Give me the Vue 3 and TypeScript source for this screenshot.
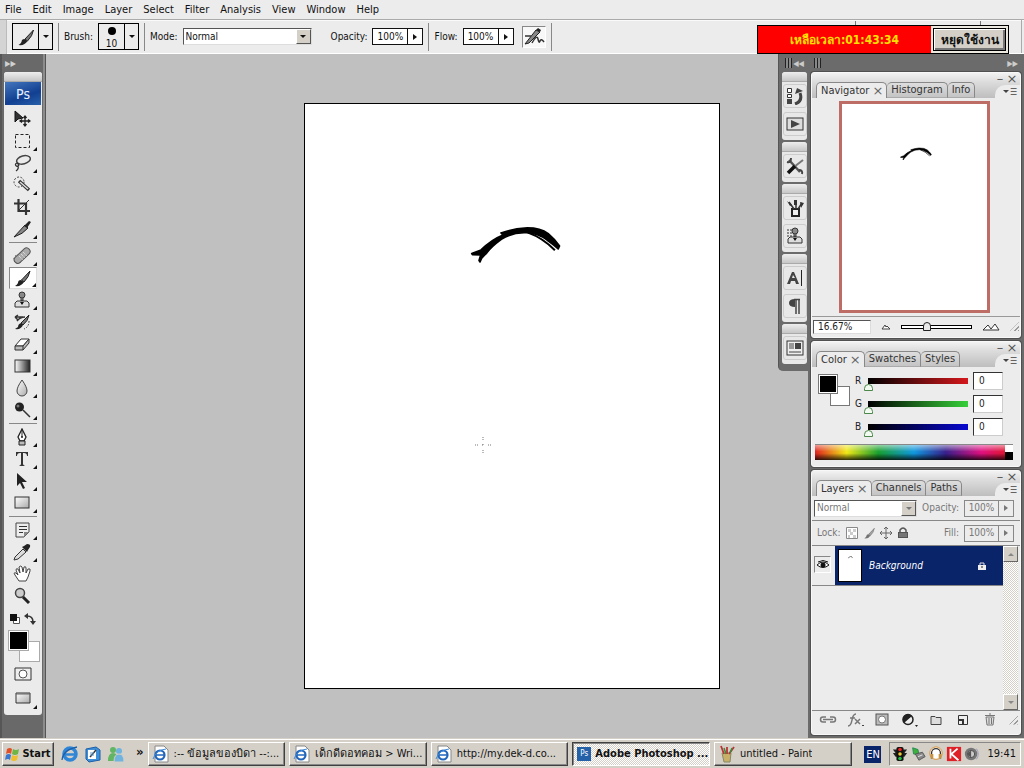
<script setup lang="ts">
import { ref } from 'vue'

interface Tool { name: string; art: string; more?: boolean; active?: boolean }

const menus = ['File', 'Edit', 'Image', 'Layer', 'Select', 'Filter', 'Analysis', 'View', 'Window', 'Help']

const brushArt = '<path d="M17 2 L8.500 11 L11 13 Q16 8 17 2Z" fill="#777" stroke="#222" stroke-width="1"/><path d="M8 11 Q5 11 5 14 Q4 16 2 17 Q8 18 11 13Z" fill="#222"/>'
const stampArt = '<circle cx="9" cy="4" r="3" fill="#888" stroke="#333"/><path d="M8 7v3h2V7" fill="#888" stroke="#333"/><path d="M4 10h10l2 2v4H2v-4z" fill="#ddd" stroke="#333"/><path d="M7 11h4l-2 3z" fill="#111"/>'

const toolGroups: Tool[][] = [
  [
    { name: 'Move', art: '<path d="M2 1v11l3-3 5-1z" fill="#333" stroke="#111"/><path d="M12 6v10M7 11h10M10.500 8l1.500-2 1.500 2M10.500 14l1.500 2 1.500-2M9 9.500L7 11l2 1.500M15 9.500l2 1.500-2 1.500" stroke="#222" stroke-width="1.300" fill="none"/>' },
    { name: 'Rectangular marquee', more: true, art: '<rect x="2.500" y="2.500" width="14" height="13" fill="none" stroke="#222" stroke-dasharray="3 2"/>' },
    { name: 'Lasso', more: true, art: '<ellipse cx="10.500" cy="6" rx="7" ry="4" fill="none" stroke="#444" stroke-width="1.500" transform="rotate(-15 10 6)"/><path d="M4 9c-3 1-1 4 1 3s0-3-1-2M5 12q1 3-2 5" fill="none" stroke="#333" stroke-width="1.300"/>' },
    { name: 'Quick selection', more: true, art: '<circle cx="6" cy="6" r="5" fill="none" stroke="#444" stroke-dasharray="2 1.500"/><path d="M6 5l10 9" stroke="#333" stroke-width="3.500"/><path d="M7 6l8 7" stroke="#ddd" stroke-width="1.500"/>' },
    { name: 'Crop', art: '<path d="M5.500 1v12H17M1 5.500h12V17" fill="none" stroke="#333" stroke-width="2.200"/><path d="M5 13L16 2" stroke="#333"/>' },
    { name: 'Slice', more: true, art: '<path d="M1 17L12 5l3 3q-5 6-14 9z" fill="#888" stroke="#222"/><path d="M11 6l5-5 2 1-4 6z" fill="#222"/>' },
  ],
  [
    { name: 'Healing brush', more: true, art: '<circle cx="5" cy="12" r="4" fill="none" stroke="#444" stroke-dasharray="1.500 1.500"/><rect x="0" y="5" width="19" height="7" rx="3.500" fill="#aaa" stroke="#555" transform="rotate(-43 9.500 9)"/><path d="M8 7l4 4M6 9l4 4M10 5l4 4" stroke="#eee" stroke-dasharray="1 1"/>' },
    { name: 'Brush', more: true, active: true, art: brushArt },
    { name: 'Clone stamp', more: true, art: stampArt },
    { name: 'History brush', more: true, art: '<path d="M16 2L8 10l2 2q5-4 6-10z" fill="#777" stroke="#222"/><path d="M8 10q-3 1-3 4l-3 2q6 1 8-4z" fill="#222"/><path d="M2 4h8M2 4l3-2M2 4l3 3M4 8q3-4 8-4" fill="none" stroke="#333" stroke-width="1.500"/><path d="M16 8q0 6-5 8" fill="none" stroke="#333" stroke-dasharray="1.500 1.500"/>' },
    { name: 'Eraser', more: true, art: '<path d="M2 11l6-7h8l-6 7z" fill="#fff" stroke="#333"/><path d="M2 11v4h8l6-7V4l-6 7z" fill="#bbb" stroke="#333"/><path d="M10 11v4" stroke="#333"/>' },
    { name: 'Gradient', more: true, art: '<rect x="2" y="3" width="15" height="12" fill="url(#toolFade)" stroke="#333"/>' },
    { name: 'Blur', more: true, art: '<path d="M9 1Q4 8 4 12a5 5 0 0 0 10 0Q14 8 9 1z" fill="url(#toolLight)" stroke="#444"/>' },
    { name: 'Dodge', more: true, art: '<circle cx="6.500" cy="6" r="4.500" fill="#222"/><circle cx="5" cy="5" r="1.500" fill="#777"/><path d="M10 9l7 7" stroke="#333" stroke-width="1.500"/>' },
  ],
  [
    { name: 'Pen', more: true, art: '<path d="M9 1L5 9l2 4h4l2-4z" fill="#fff" stroke="#222" stroke-width="1.300"/><path d="M9 1v8" stroke="#222"/><circle cx="9" cy="9" r="1" fill="#222"/><path d="M6 13h6v4H6z" fill="#bbb" stroke="#222"/>' },
    { name: 'Type', more: true, art: '<path d="M3 2h12v4h-1q0-3-3-3h-1v11q0 1 2 2H6q2-1 2-2V3H7Q4 3 4 6H3z" fill="#333"/>' },
    { name: 'Path selection', more: true, art: '<path d="M4 1v13l3-3 3 6 2-1-3-6h5z" fill="#222"/>' },
    { name: 'Rectangle', more: true, art: '<rect x="2" y="3" width="14" height="11" fill="url(#toolLight)" stroke="#333"/>' },
  ],
  [
    { name: 'Notes', more: true, art: '<path d="M3 2h13v9l-5 5H3z" fill="#eee" stroke="#444"/><path d="M6 5.500h8M6 8.500h8M6 11.500h4" stroke="#333"/><path d="M11 16v-5h5z" fill="#888"/>' },
    { name: 'Eyedropper', more: true, art: '<path d="M1 17l1-3 8-8 3 3-8 7z" fill="#ddd" stroke="#333"/><path d="M9 4l5 5 1-2 2-3q1-3-3-3l-3 2z" fill="#222"/>' },
    { name: 'Hand', art: '<path d="M6 16L2 10q-2-3 1-2l2 2-2-5q0-2 2-1l2 4-1-6q2-2 3 0l1 5 1-5q2-1 2 1v5l2-4q3-1 2 2l-2 6-2 4z" fill="#fff" stroke="#444"/>' },
    { name: 'Zoom', art: '<circle cx="7" cy="6" r="4.500" fill="#ccc" stroke="#444" stroke-width="1.500"/><path d="M10 10l6 6" stroke="#222" stroke-width="3"/>' },
  ],
]

const dockGroups: Tool[][] = [
  [
    { name: 'History', art: '<path d="M1.500 1.500h4v4h-4zM1.500 7.500h4v3h-4z" fill="#fff" stroke="#333"/><path d="M1 12h5v5H1z" fill="#444"/><path d="M9 17q8-3 5-11" fill="none" stroke="#444" stroke-width="3"/><path d="M9 7l2-6 6 3z" fill="#444"/>' },
    { name: 'Actions', art: '<rect x="1" y="3" width="16" height="12" fill="#ddd" stroke="#333"/><path d="M5 5l9 4-9 4z" fill="#444"/>' },
  ],
  [
    { name: 'Tool presets', art: '<path d="M3 3l11 12" stroke="#555" stroke-width="2.500"/><path d="M17 3L8 10" stroke="#777" stroke-width="2"/><path d="M9 9l-7 7" stroke="#111" stroke-width="3.500"/><path d="M13 13q4 0 3 4M1 5q4 1 4-4" fill="none" stroke="#444" stroke-width="2"/>' },
  ],
  [
    { name: 'Brushes', art: '<path d="M6 10h7v7H6z" fill="#eee" stroke="#222" stroke-width="2"/><path d="M8 10L3 3M10 10V1M12 10l4-6" stroke="#333" stroke-width="1.500"/><path d="M1 2l3 5 2-1zM8 1h3v5H8zM14 3l4 1-3 5z" fill="#333"/>' },
    { name: 'Clone source', art: '<path d="M1 3h5M1 6h5M1 9h5" stroke="#333" stroke-dasharray="2 1"/>' + stampArt },
  ],
  [
    { name: 'Character', art: '<path d="M1 15L6 3h2l5 12h-3l-1-3H5l-1 3zM6 9h3L7 6z" fill="#444" fill-rule="evenodd"/><path d="M15.500 1v16" stroke="#222"/>' },
    { name: 'Paragraph', art: '<path d="M10 3v14M13 3v14M8 2.500h6" stroke="#444" stroke-width="1.500"/><path d="M9 2Q3 2 3 6t6 4z" fill="#444"/>' },
  ],
  [
    { name: 'Layer comps', art: '<rect x="1" y="2" width="16" height="14" fill="#eee" stroke="#333"/><path d="M3 5h5M3 7h5M3 9h5M3 13h12" stroke="#444"/><path d="M9 4h6v6H9z" fill="#444"/>' },
  ],
]

const channels = ref([
  { key: 'R', value: 0, color: 'red' },
  { key: 'G', value: 0, color: 'green' },
  { key: 'B', value: 0, color: 'blue' },
])

const footerIcons: Tool[] = [
  { name: 'Link layers', art: '<path d="M7 6H4a2.500 2.500 0 0 0 0 5h3M11 6h3a2.500 2.500 0 0 1 0 5h-3M4 8.500h10" fill="none" stroke="#777" stroke-width="1.500"/>' },
  { name: 'Layer style', art: '<path d="M2 15q3 0 4-6t4-6M4 7h5M9 8l5 5M14 8l-5 5" fill="none" stroke="#777" stroke-width="1.500"/><path d="M16 14h2v1h-2z" fill="#444"/>' },
  { name: 'Layer mask', art: '<rect x="3" y="3" width="12" height="11" fill="#bbb" stroke="#555"/><circle cx="9" cy="8.500" r="3.500" fill="#fff" stroke="#777"/>' },
  { name: 'Adjustment layer', art: '<circle cx="8" cy="8.500" r="5" fill="#eee" stroke="#222" stroke-width="1.500"/><path d="M12 5A5 5 0 0 0 4 12z" fill="#222"/><path d="M15 14h3l-1.500 2z" fill="#222"/>' },
  { name: 'New group', art: '<path d="M4 5.500h4l1 1h5v7H4z" fill="#ddd" stroke="#444"/>' },
  { name: 'New layer', art: '<path d="M4.500 4.500h9v9h-9z" fill="#eee" stroke="#333"/><path d="M4 9h5v5" fill="none" stroke="#333" stroke-width="2"/>' },
  { name: 'Delete layer', art: '<path d="M5 6h8l-1 8H6zM4 4.500h10M8 3h2M8 7v6M10.500 7v6" fill="#ddd" stroke="#777"/>' },
]

const ieArt = '<path d="M3 1h9l4 4v12H3z" fill="#fff" stroke="#888"/><circle cx="8" cy="10" r="4.500" fill="none" stroke="#2266bb" stroke-width="2.200"/><path d="M4 10h9" stroke="#2266bb" stroke-width="1.500"/><path d="M1 14Q4 5 14 4" fill="none" stroke="#3b8adb"/>'
const tasks = [
  { title: ':-- ข้อมูลของบิดา --:...', art: ieArt },
  { title: 'เด็กดีดอทคอม > Wri...', art: ieArt },
  { title: 'http://my.dek-d.co...', art: ieArt },
  { title: 'Adobe Photoshop ...', art: '', active: true },
  { title: 'untitled - Paint', art: '<path d="M4 8h9l-1 9H6z" fill="#c8b068" stroke="#886"/><path d="M6 9L3 1M9 9V2M11 9l5-7" stroke="#b33" stroke-width="1.800"/><path d="M8 9L6 3M12 8l2-5" stroke="#3a8a3a" stroke-width="1.500"/>' },
]

const quick = [
  { name: 'Internet Explorer', art: '<circle cx="9" cy="9" r="6" fill="none" stroke="#2f86d6" stroke-width="3.500"/><path d="M4 9.500h11" stroke="#2f86d6" stroke-width="2.500"/><path d="M1 15Q2 5 16 2" fill="none" stroke="#1c5fa8" stroke-width="1.300"/>' },
  { name: 'Show desktop', art: '<path d="M2 4l10-2 4 3v10l-11 2-3-3z" fill="#3f8fd8" stroke="#1c5fa8"/><path d="M4 5h8v9H4z" fill="#fff"/><path d="M6 12l6-7" stroke="#333" stroke-width="1.500"/><path d="M6 8h4M6 10h4" stroke="#69c"/>' },
  { name: 'Messenger', art: '<circle cx="6" cy="5" r="3" fill="#62b562"/><path d="M1 16q0-8 5-8t5 8z" fill="#62b562"/><circle cx="12" cy="6" r="3" fill="#6fb3de"/><path d="M7 17q0-8 5-8t5 8z" fill="#6fb3de" stroke="#d4d0c8"/>' },
]

const tray = [
  '<path d="M1 4h16l-3 4h3l-3 4H4L1 8h3z" fill="#222"/><rect x="5" y="1" width="8" height="16" rx="2" fill="#111"/><circle cx="9" cy="4" r="2" fill="#e22"/><circle cx="9" cy="9" r="2" fill="#ec3"/><circle cx="9" cy="14" r="2" fill="#2b4"/>',
  '<path d="M3 2l6 2 1 6-6-1z" fill="#3db03d" stroke="#285"/><path d="M6 9l8-2 3 5-7 4z" fill="#888" stroke="#555"/><path d="M9 12l5-2" stroke="#eee"/>',
  '<circle cx="9" cy="8" r="7" fill="#fff" stroke="#d98c2b"/><path d="M4 14V8a5 5 0 0 1 10 0v6" fill="none" stroke="#333" stroke-width="1.500"/><path d="M3 9h3v5H3zM12 9h3v5h-3z" fill="#c9923f"/>',
  '<path d="M1 1h16v16H1z" fill="#df2027"/><path d="M5 3v11M13 3L6 9l8 7" fill="none" stroke="#fff" stroke-width="2"/>',
  '<circle cx="8" cy="9" r="7" fill="#777"/><circle cx="8" cy="9" r="4" fill="#ccc" stroke="#444"/><path d="M8 5v8l-4-3V8z" fill="#555"/><path d="M14 3q4 6 0 12" fill="none" stroke="#99b"/>',
]

const mode = ref('Normal')
const blend = ref('Normal')
const opacity = ref('100%')
const flow = ref('100%')
const layerOpacity = ref('100%')
const fill = ref('100%')
const zoom = ref('16.67%')
</script>

<template>
  <div class="app">
    <svg class="defs" width="0" height="0" aria-hidden="true">
      <defs>
        <linearGradient id="toolFade"><stop offset="0" stop-color="#fff" /><stop offset="1" stop-color="#222" /></linearGradient>
        <linearGradient id="toolLight" x1="0" y1="0" x2="1" y2="1"><stop offset="0" stop-color="#fff" /><stop offset="1" stop-color="#aaa" /></linearGradient>
        <symbol id="artwork" viewBox="0 0 414 584">
          <g transform="translate(155 111) scale(.3333)">
            <path d="M36 115 L64 104 Q95 73 130 59 L124 53 Q165 39 195 38 Q240 36 266 55 Q285 71 300 92 L296 101 Q280 86 262 74 Q235 53 200 52 Q160 50 125 72 Q95 94 82 112 Q74 120 66 129 L61 140 L58 136 L63 119 L38 118Z" stroke="#000" stroke-width="5" stroke-linejoin="round" />
            <path d="M205 52 Q250 68 286 105" fill="none" stroke="#000" stroke-width="6" />
          </g>
        </symbol>
      </defs>
    </svg>

    <nav class="menubar" aria-label="Main menu">
      <button v-for="m in menus" :key="m" type="button">{{ m }}</button>
    </nav>

    <header class="options">
      <span class="grip"></span>
      <button class="preset" type="button" aria-label="Brush preset">
        <svg class="ico" viewBox="0 0 18 18" v-html="brushArt"></svg><i><b class="down"></b></i>
      </button>
      <span class="rule"></span>
      <span class="lbl">Brush:</span>
      <button class="preset size" type="button" aria-label="Brush size">
        <span class="tip"><b class="dot"></b>10</span><i><b class="down"></b></i>
      </button>
      <span class="rule"></span>
      <label class="lbl" for="mode">Mode:</label>
      <span class="combo modebox">
        <select id="mode" v-model="mode"><option>Normal</option></select><i><b class="down"></b></i>
      </span>
      <label class="lbl" for="opacity">Opacity:</label>
      <span class="num"><input id="opacity" v-model="opacity"><button type="button" aria-label="Adjust opacity"><b class="play"></b></button></span>
      <span class="rule"></span>
      <label class="lbl" for="flow">Flow:</label>
      <span class="num"><input id="flow" v-model="flow"><button type="button" aria-label="Adjust flow"><b class="play"></b></button></span>
      <button class="airbrush" type="button" aria-label="Airbrush">
        <svg viewBox="0 0 22 18" width="22" height="18"><path d="M2 16L13 2l4 2L6 15z" fill="#888" stroke="#222" /><path d="M13 2l2-2 3 2-1 2z" fill="#222" /><path d="M2 8h6M9 15q5-9 6-4t2 2 4 1" fill="none" stroke="#333" stroke-width="1.500" /></svg>
      </button>
      <span class="rule"></span>
      <span class="ends"><b></b><b></b></span>
      <aside class="timer">
        <span>เหลือเวลา:01:43:34</span>
        <button type="button">หยุดใช้งาน</button>
      </aside>
    </header>

    <main class="workspace">
      <section class="desk">
        <div class="page">
          <svg class="art"><use href="#artwork" /></svg>
          <svg class="cursor" viewBox="0 0 16 16"><path d="M8 0v3M8 7v2M8 13v3M0 8h3M7 8h2M13 8h3" stroke="#777" stroke-dasharray="1 1" /></svg>
        </div>
      </section>

      <aside class="toolcol">
        <div class="colhead">▸▸</div>
        <div class="toolbox">
          <div class="grab"></div>
          <div class="ps">Ps</div>
          <div class="tools">
            <div v-for="(g, i) in toolGroups" :key="i" class="tgroup">
              <button v-for="t in g" :key="t.name" type="button" :aria-label="t.name" :class="{ active: t.active, more: t.more }">
                <svg class="ico" viewBox="0 0 18 18" v-html="t.art"></svg>
              </button>
            </div>
          </div>
          <div class="mini">
            <svg viewBox="0 0 12 12" width="12" height="12"><path d="M4.500 4.500h6v6h-6z" fill="#fff" stroke="#555" /><path d="M1 1h7v7H1z" fill="#111" /></svg>
            <svg viewBox="0 0 12 12" width="12" height="12"><path d="M3 3q6 0 6 6" fill="none" stroke="#333" stroke-width="1.500" /><path d="M0 3l4-3v6zM9 12L6 8h6z" fill="#333" /></svg>
          </div>
          <div class="swatches"><span class="back"></span><span class="fore"></span></div>
          <button class="wide" type="button" aria-label="Quick mask"><svg width="18" height="14" viewBox="0 0 18 14"><path d="M1 1h16v12H1z" fill="#eee" stroke="#333" /><circle cx="9" cy="7" r="4" fill="#fff" stroke="#555" /></svg></button>
          <button class="wide more" type="button" aria-label="Screen mode"><svg width="18" height="14" viewBox="0 0 18 14"><path d="M2 2h14v10H2z" fill="url(#toolLight)" stroke="#333" /><path d="M2 3h14" stroke="#666" /></svg></button>
        </div>
      </aside>

      <aside class="docks">
        <div class="strip">
          <div class="dockhead"><b class="bars"></b><span>◂◂</span></div>
          <div class="stack">
            <div v-for="(g, i) in dockGroups" :key="i" class="dgroup">
              <div class="grab"></div>
              <button v-for="t in g" :key="t.name" type="button" :aria-label="t.name"><svg class="ico" viewBox="0 0 18 18" v-html="t.art"></svg></button>
            </div>
          </div>
        </div>

        <div class="panels">
          <div class="dockhead"><b class="bars"></b><span>▸▸</span></div>

          <section class="panel navigator">
            <div class="ptop"><button type="button" aria-label="Minimize">–</button><button type="button" aria-label="Close">×</button></div>
            <div class="tabs">
              <button class="on" type="button">Navigator <em>×</em></button><button type="button">Histogram</button><button type="button">Info</button>
              <span class="flyout"><b class="down"></b>☰</span>
            </div>
            <div class="navbody"><div class="preview"><svg><use href="#artwork" /></svg></div></div>
            <div class="navfoot">
              <input v-model="zoom" aria-label="Zoom">
              <svg width="10" height="6" viewBox="0 0 10 6"><path d="M1 5l3-4 1 2 1-1 3 3z" fill="#fff" stroke="#444" /></svg>
              <div class="slider"><input type="range" min="0" max="100" value="35" aria-label="Zoom slider"></div>
              <svg width="18" height="8" viewBox="0 0 18 8"><path d="M1 7l5-5 3 4 4-5 4 6z" fill="#fff" stroke="#333" /></svg>
              <b class="sizer"></b>
            </div>
          </section>

          <section class="panel color">
            <div class="ptop"><button type="button" aria-label="Minimize">–</button><button type="button" aria-label="Close">×</button></div>
            <div class="tabs">
              <button class="on" type="button">Color <em>×</em></button><button type="button">Swatches</button><button type="button">Styles</button>
              <span class="flyout"><b class="down"></b>☰</span>
            </div>
            <div class="colorbody">
              <div class="chips"><span class="back"></span><span class="fore"></span></div>
              <div class="rows">
                <div v-for="c in channels" :key="c.key" class="crow">
                  <label :for="'ch' + c.key">{{ c.key }}</label>
                  <input v-model="c.value" class="ramp" :class="c.color" type="range" min="0" max="255" :aria-label="c.key + ' slider'">
                  <input :id="'ch' + c.key" v-model="c.value" class="val">
                </div>
              </div>
            </div>
            <div class="spectrum"><span></span></div>
          </section>

          <section class="panel layers">
            <div class="ptop"><button type="button" aria-label="Minimize">–</button><button type="button" aria-label="Close">×</button></div>
            <div class="tabs">
              <button class="on" type="button">Layers <em>×</em></button><button type="button">Channels</button><button type="button">Paths</button>
              <span class="flyout"><b class="down"></b>☰</span>
            </div>
            <div class="lrow">
              <span class="combo"><select v-model="blend" aria-label="Blend mode"><option>Normal</option></select><i><b class="down"></b></i></span>
              <label for="lop">Opacity:</label>
              <span class="num"><input id="lop" v-model="layerOpacity"><button type="button" aria-label="Adjust layer opacity"><b class="play"></b></button></span>
            </div>
            <div class="lrow second">
              <span>Lock:</span>
              <svg width="12" height="12" viewBox="0 0 12 12"><path d="M.500 .500h11v11H.500z" fill="#fff" stroke="#888" /><path d="M2 2h3v3H2zM7 2h3v3H7zM4 5h3v3H4zM2 8h2v3H2zM7 8h3v3H7z" fill="#ccc" /></svg>
              <svg class="soft" width="12" height="12" viewBox="0 0 18 18" v-html="brushArt"></svg>
              <svg width="12" height="12" viewBox="0 0 12 12"><path d="M6 0v12M0 6h12M4 2l2-2 2 2M4 10l2 2 2-2M2 4L0 6l2 2M10 4l2 2-2 2" fill="none" stroke="#666" /></svg>
              <svg width="12" height="12" viewBox="0 0 12 12"><path d="M3 5V3q3-4 6 0v2" fill="none" stroke="#555" stroke-width="1.500" /><path d="M1 5h10v6H1z" fill="#555" /><path d="M2 7h8M2 9h8" stroke="#999" /></svg>
              <label class="fill" for="fill">Fill:</label>
              <span class="num"><input id="fill" v-model="fill"><button type="button" aria-label="Adjust fill"><b class="play"></b></button></span>
            </div>
            <div class="list">
              <div class="items">
                <div class="layer">
                  <button class="eye" type="button" aria-label="Layer visibility"><svg width="12" height="10" viewBox="0 0 12 10"><path d="M0 5Q6-1 12 5Q6 10 0 5z" fill="#fff" stroke="#111" /><circle cx="6" cy="5" r="2.500" fill="#111" /><path d="M1 2q5-3 10 0" fill="none" stroke="#111" /></svg></button>
                  <div class="name">
                    <span class="thumb"><svg><use href="#artwork" /></svg></span>
                    <span class="title">Background</span>
                    <svg width="8" height="8" viewBox="0 0 8 8"><path d="M2 3V1h4v2" fill="none" stroke="#ddd" /><path d="M0 3h8v5H0z" fill="#eee" /><path d="M3 5h2" stroke="#222" /></svg>
                  </div>
                </div>
              </div>
              <div class="scroll"><button type="button" aria-label="Scroll up"><b class="down up"></b></button><button type="button" aria-label="Scroll down"><b class="down"></b></button></div>
            </div>
            <div class="lfoot">
              <button v-for="f in footerIcons" :key="f.name" type="button" :aria-label="f.name"><svg class="ico" viewBox="0 0 18 18" v-html="f.art"></svg></button>
              <b class="sizer"></b>
            </div>
          </section>
        </div>
      </aside>
    </main>

    <footer class="taskbar">
      <button class="start" type="button">
        <svg width="16" height="16" viewBox="0 0 16 16"><path d="M2 3q3-2 5 0L6 8Q4 6 1 8z" fill="#e2502a" /><path d="M8 3q3 2 6 0l-1 5q-3 2-6 0z" fill="#6eb544" /><path d="M1 9q3-2 5 0l-1 5q-2-2-5 0z" fill="#3a77d0" /><path d="M7 9q3 2 6 0l-1 5q-3 2-6 0z" fill="#f0bd2c" /></svg>Start
      </button>
      <div class="quick">
        <button v-for="q in quick" :key="q.name" type="button" :aria-label="q.name"><svg class="ico" viewBox="0 0 18 18" v-html="q.art"></svg></button>
        <b>»</b>
      </div>
      <div class="tasks">
        <button v-for="t in tasks" :key="t.title" type="button" :class="{ pressed: t.active }">
          <span v-if="t.active" class="psicon">Ps</span>
          <svg v-else class="ico" viewBox="0 0 18 18" v-html="t.art"></svg><span class="tt">{{ t.title }}</span>
        </button>
      </div>
      <span class="lang">EN</span>
      <div class="tray">
        <svg v-for="(t, i) in tray" :key="i" viewBox="0 0 18 18" width="16" height="16" v-html="t"></svg>
        <time>19:41</time>
      </div>
    </footer>
  </div>
</template>

<style>
body { margin: 0; }
</style>

<style scoped>
.app {
  display: flex; flex-direction: column; height: 100vh; overflow: hidden;
  background: #ececec; color: #111;
  font: 11px/14px "DejaVu Sans Condensed", "Noto Sans", sans-serif;
}
.app *, .app *::before, .app *::after { box-sizing: border-box; }
button, input, select { font: inherit; color: inherit; margin: 0; padding: 0; border: 0; background: none; border-radius: 0; appearance: none; outline: 0; }
button { display: flex; align-items: center; justify-content: center; white-space: nowrap; }
input, select { min-width: 0; }
.defs { position: absolute; }
.ico { width: 18px; height: 18px; flex: none; }
.down { display: block; border: 3px solid transparent; border-top-color: currentColor; border-bottom: 0; }
.down.up { transform: rotate(180deg); }
.play { display: block; border: 3px solid transparent; border-left: 4px solid currentColor; border-right: 0; }

.menubar { display: flex; align-items: center; gap: 11px; height: 19px; padding-left: 5px; flex: none; }

.options { position: relative; display: flex; align-items: center; gap: 5px; height: 35px; flex: none; border-top: 1px solid #aaa; border-bottom: 1px solid #fff; box-shadow: inset 0 1px #fafafa; font-size: 10px; }
.grip { width: 7px; height: 34px; background: #d4d4d4; border-right: 1px solid #bbb; }
.preset { width: 41px; height: 27px; border: 1px solid #000; }
.preset .ico { flex: 1; }
.preset i { display: flex; align-items: center; justify-content: center; width: 14px; height: 100%; border-left: 1px solid #000; }
.tip { display: flex; flex-direction: column; align-items: center; flex: 1; line-height: 11px; }
.dot { width: 8px; height: 8px; margin: 3px; border-radius: 50%; background: #000; }
.rule { width: 1px; height: 28px; background: #888; }
.lbl { white-space: nowrap; }
.combo { display: flex; height: 17px; background: #fff; border: 1px solid; border-color: #555 #ddd #ddd #555; }
.combo select { flex: 1; padding-left: 2px; }
.combo i { display: flex; align-items: center; justify-content: center; width: 15px; background: #d4d0c8; border: 1px solid; border-color: #fff #555 #555 #fff; }
.modebox { width: 129px; margin-right: 14px; }
.num { display: flex; width: 50px; height: 17px; border: 1px solid #111; background: #fff; }
.options .num { width: 51px; }
.num input { flex: 1; width: 30px; text-align: center; }
.num button { width: 15px; border-left: 1px solid #111; }
.airbrush { width: 24px; height: 22px; margin-left: 3px; border: 1px solid; border-color: #888 #fff #fff #888; background: #f8f8f8; }
.ends { align-self: flex-start; display: flex; gap: 124px; height: 33px; margin-left: auto; padding-right: 40px; border-right: 1px solid #aaa; margin-right: 2px; }
.ends b { width: 1px; height: 5px; margin-top: 1px; background: #777; }
.timer { position: absolute; z-index: 5; top: 5px; right: 15px; display: flex; width: 252px; height: 29px; border: 1px solid #000; background: #ece9e0; }
.timer span { flex: 1; display: flex; align-items: center; justify-content: center; background: #f00; color: #ffe000; font-weight: bold; font-size: 12px; }
.timer button { width: 73px; margin: 2px; border: 1px solid #000; background: #d4d0c8; box-shadow: inset 1px 1px #fff, inset -2px -2px #777; font-weight: bold; font-size: 12px; }

.workspace { flex: 1; min-height: 0; display: grid; grid-template: minmax(0, 1fr) / minmax(0, 1fr); background: #c0c0c0; }
.desk, .toolcol, .docks { grid-area: 1 / 1; }
.desk { display: flex; align-items: center; justify-content: center; }
.page { position: relative; height: calc(100% - 98px); aspect-ratio: 416 / 587; border: 1px solid #000; background: #fff; }
.art { display: block; width: 100%; height: 100%; }
.cursor { position: absolute; left: 41%; top: 57%; width: 16px; height: 16px; }

.toolcol { justify-self: start; width: 46px; padding: 0 4px; background: #696969; border-right: 1px solid #555; box-shadow: inset -2px 0 #8c8c8c, inset 2px 0 #565656; }
.colhead { height: 18px; color: #d0d0d0; font-size: 12px; line-height: 18px; padding-left: 1px; }
.toolbox { width: 38px; height: 643px; background: #ebebeb; border-radius: 3px; overflow: hidden; }
.grab { height: 10px; flex: none; background: linear-gradient(#eee, #c6c6c6); border-bottom: 1px solid #aaa; }
.ps { display: flex; align-items: center; justify-content: center; height: 23px; margin: 0 1px; background: linear-gradient(160deg, #4477bd, #123f91 60%, #2861ab); color: #e8f2ff; font-size: 14px; }
.tools { padding-top: 3px; }
.tgroup + .tgroup { margin: 2px 5px 0; padding-top: 2px; border-top: 1px solid #888; }
.tgroup button { position: relative; width: 28px; height: 22px; margin: 0 auto; padding-right: 3px; }
.tgroup button.active { background: #fff; border: 1px solid; border-color: #888 #ddd #ddd #888; }
.more { position: relative; }
.more::after { content: ""; position: absolute; right: 0; bottom: 1px; border: 2px solid #111; border-top-color: transparent; border-left-color: transparent; }
.mini { display: flex; justify-content: space-between; padding: 6px 6px 2px 5px; }
.swatches, .chips { position: relative; flex: none; width: 32px; height: 32px; margin: 3px 4px 0; }
.swatches span, .chips span { position: absolute; width: 21px; height: 21px; border: 1px solid #aaa; }
.fore { left: 0; top: 0; background: #000; box-shadow: inset 0 0 0 1px #fff; }
.back { right: 0; bottom: 0; background: #fff; }
.wide { width: 28px; height: 24px; margin: 0 auto; }

.docks { justify-self: end; display: flex; align-items: flex-start; height: 100%; }
.strip { width: 30px; height: 317px; padding: 0 1px 0 3px; background: #6b6b6b; border: 0 solid #555; border-left-width: 1px; border-bottom-left-radius: 5px; }
.dockhead { display: flex; align-items: center; justify-content: space-between; height: 18px; color: #ccc; font-size: 12px; padding: 0 3px; }
.bars { width: 7px; height: 10px; background: repeating-linear-gradient(90deg, #222 0 1px, #888 1px 3px); }
.stack { display: flex; flex-direction: column; gap: 2px; }
.dgroup { display: flex; flex-direction: column; padding-bottom: 2px; background: #e8e8e8; border-radius: 3px; overflow: hidden; }
.dgroup button { width: 24px; height: 24px; margin: 2px auto; border: 1px solid #ccc; border-radius: 3px; }
.dgroup .grab { border-radius: 3px 3px 0 0; }

.panels { display: flex; flex-direction: column; width: 216px; height: 100%; padding: 0 3px 3px; background: #6b6b6b; gap: 3px; }
.panels > .dockhead { margin-bottom: -3px; }
.panel { display: flex; flex-direction: column; background: #ececec; border-radius: 3px; overflow: hidden; border: 1px solid #f8f8f8; box-shadow: 0 0 0 1px #505050; flex: none; color: #222; }
.ptop { position: relative; z-index: 1; display: flex; justify-content: flex-end; align-items: center; gap: 4px; height: 8px; padding: 3px 4px 0 0; background: linear-gradient(#f2f2f2, #dedede); }
.ptop button { width: 8px; height: 10px; font: 13px/10px "DejaVu Sans", sans-serif; color: #555; }
.tabs { display: flex; align-items: flex-end; height: 17px; padding-left: 4px; background: linear-gradient(#dedede, #bebebe); }
.tabs button { height: 16px; padding: 0 4px; border: 1px solid #888; border-bottom-color: #aaa; border-left-width: 0; border-radius: 5px 5px 0 0; background: linear-gradient(#dedede, #c4c4c4); color: #333; }
.tabs button.on { padding-right: 3px; border-left-width: 1px; border-bottom: 0; background: #ececec; }
.tabs em { font: 13px/12px "DejaVu Sans", sans-serif; margin-left: 3px; color: #666; }
.flyout { display: flex; align-items: center; gap: 1px; height: 13px; margin-left: auto; padding: 0 3px 0 8px; background: #ececec; font-size: 9px; border-top-left-radius: 10px; color: #444; }

.navigator { height: 266px; }
.navbody { flex: 1; min-height: 0; display: flex; align-items: center; justify-content: center; padding-right: 4px; }
.preview { width: 151px; height: 212px; border: 3px solid #bd6c66; background: #fff; }
.preview svg, .thumb svg { display: block; width: 100%; height: 100%; }
.navfoot { display: flex; align-items: center; gap: 10px; height: 20px; margin-bottom: 1px; border-top: 1px solid #999; padding-left: 1px; font-size: 10px; }
.navfoot > input { width: 58px; height: 14px; padding-left: 4px; background: #fff; border: 1px solid; border-color: #555 #ddd #ddd #555; }
.navfoot svg { flex: none; }
.slider { flex: 1; display: flex; min-width: 0; }
.slider input { width: 100%; height: 4px; border: 1px solid #000; background: #fff; }
.slider input::-webkit-slider-thumb { appearance: none; width: 8px; height: 9px; border: 1px solid #222; border-radius: 4px 4px 0 0; background: #e8e8e8; }
.sizer { width: 9px; height: 9px; flex: none; background: repeating-linear-gradient(135deg, #999 0 1px, transparent 1px 3px); clip-path: polygon(100% 0, 100% 100%, 0 100%); }
.navfoot .sizer { margin-right: 1px; }

.color { height: 126px; }
.colorbody { display: flex; padding: 2px 17px 0 3px; }
.chips { margin: 5px 5px 0 3px; }
.chips span { width: 20px; height: 20px; border-color: #777; }
.rows { flex: 1; min-width: 0; font-size: 10px; }
.crow { display: flex; align-items: center; height: 23px; }
.crow label { width: 13px; }
.ramp { flex: 1; height: 6px; }
.red { background: linear-gradient(90deg, #000, #d4181c); }
.green { background: linear-gradient(90deg, #000, #36cf38); }
.blue { background: linear-gradient(90deg, #000, #0808d0); }
.ramp::-webkit-slider-thumb { appearance: none; width: 9px; height: 7px; margin: 13px 0 0 -4px; border: 1px solid #4c884c; border-radius: 5px 5px 0 0; background: #f2faf2; }
.val { width: 30px; height: 18px; margin-left: 5px; padding-left: 5px; background: #fff; border: 1px solid; border-color: #333 #ccc #ccc #333; }
.spectrum { display: flex; justify-content: flex-end; height: 16px; margin: 6px 7px 0 3px; border-top: 1px solid #888; background: linear-gradient(#fff8, #fff0 45%, #0000 55%, #000c), linear-gradient(90deg, #e02020, #f0e818 16%, #18a030 32%, #1098e0 50%, #38208c 66%, #e01080 84%, #e01818); }
.spectrum span { width: 8px; background: linear-gradient(#fff 50%, #000 50%); }

.layers { flex: 1; min-height: 0; }
.lrow { display: flex; align-items: center; gap: 5px; height: 25px; padding: 0 6px 0 2px; border-bottom: 1px solid #888; color: #777; font-size: 10px; flex: none; }
.lrow .combo { flex: 1; }
.lrow .num { border-color: #888; background: none; }
.lrow .num button { border-color: #888; }
.lrow.second { padding-left: 5px; }
.soft { opacity: .6; }
.fill { margin-left: auto; }
.list { flex: 1; min-height: 0; display: flex; }
.items { flex: 1; }
.layer { display: flex; height: 40px; border-bottom: 1px solid #888; }
.eye { width: 17px; height: 17px; margin: 10px 4px 0 2px; border: 1px solid; border-color: #888 #fff #fff #888; }
.name { flex: 1; display: flex; align-items: center; padding: 0 17px 0 3px; background: #0a246a; color: #fff; }
.thumb { width: 24px; height: 33px; border: 1px solid #000; background: #fff; }
.title { flex: 1; margin-left: 7px; font-style: italic; font-size: 10px; }
.scroll { display: flex; flex-direction: column; justify-content: space-between; width: 15px; margin-right: 2px; background: repeating-conic-gradient(#d4d0c8 0 25%, #fff 0 50%) 0 0 / 2px 2px; }
.scroll button { height: 16px; background: #d4d0c8; border: 1px solid; border-color: #fff #666 #666 #fff; color: #888; }
.lfoot { display: flex; align-items: center; gap: 9px; height: 19px; margin-bottom: 5px; padding-left: 7px; border-top: 1px solid #888; flex: none; }
.lfoot .sizer { margin-left: auto; margin-right: 2px; }

.taskbar { display: flex; align-items: center; height: 30px; flex: none; padding: 2px 3px 0 2px; background: #d4d0c8; box-shadow: inset 0 1px #d4d0c8, inset 0 2px #fff; }
.start, .tasks button { height: 24px; border: 1px solid; border-color: #fff #404040 #404040 #fff; box-shadow: inset -1px -1px #888; }
.start { width: 52px; gap: 1px; font-weight: bold; flex: none; }
.quick { display: flex; align-items: center; gap: 5px; padding: 0 4px 0 7px; flex: none; }
.quick b { margin-left: 6px; align-self: flex-start; font-size: 13px; }
.tasks { display: flex; gap: 4px; width: 704px; flex: 0 1 auto; }
.tasks button { flex: 1 1 0; min-width: 0; justify-content: flex-start; gap: 4px; padding-left: 3px; }
.tt { overflow: hidden; }
.tasks .pressed { font-weight: bold; border-color: #404040 #fff #fff #404040; box-shadow: inset 1px 1px #888; background: repeating-conic-gradient(#d4d0c8 0 25%, #fff 0 50%) 0 0 / 2px 2px; }
.psicon { width: 14px; height: 14px; margin-left: 1px; flex: none; background: #2461a8; color: #fff; font-size: 8px; font-weight: normal; text-align: center; }
.lang { margin-left: auto; width: 17px; height: 17px; background: #0a246a; color: #fff; line-height: 17px; text-align: center; }
.tray { display: flex; align-items: center; gap: 2px; height: 24px; margin-left: 8px; padding: 0 4px 0 2px; border: 1px solid; border-color: #888 #fff #fff #888; flex: none; }
.tray time { margin-left: 5px; }
</style>
